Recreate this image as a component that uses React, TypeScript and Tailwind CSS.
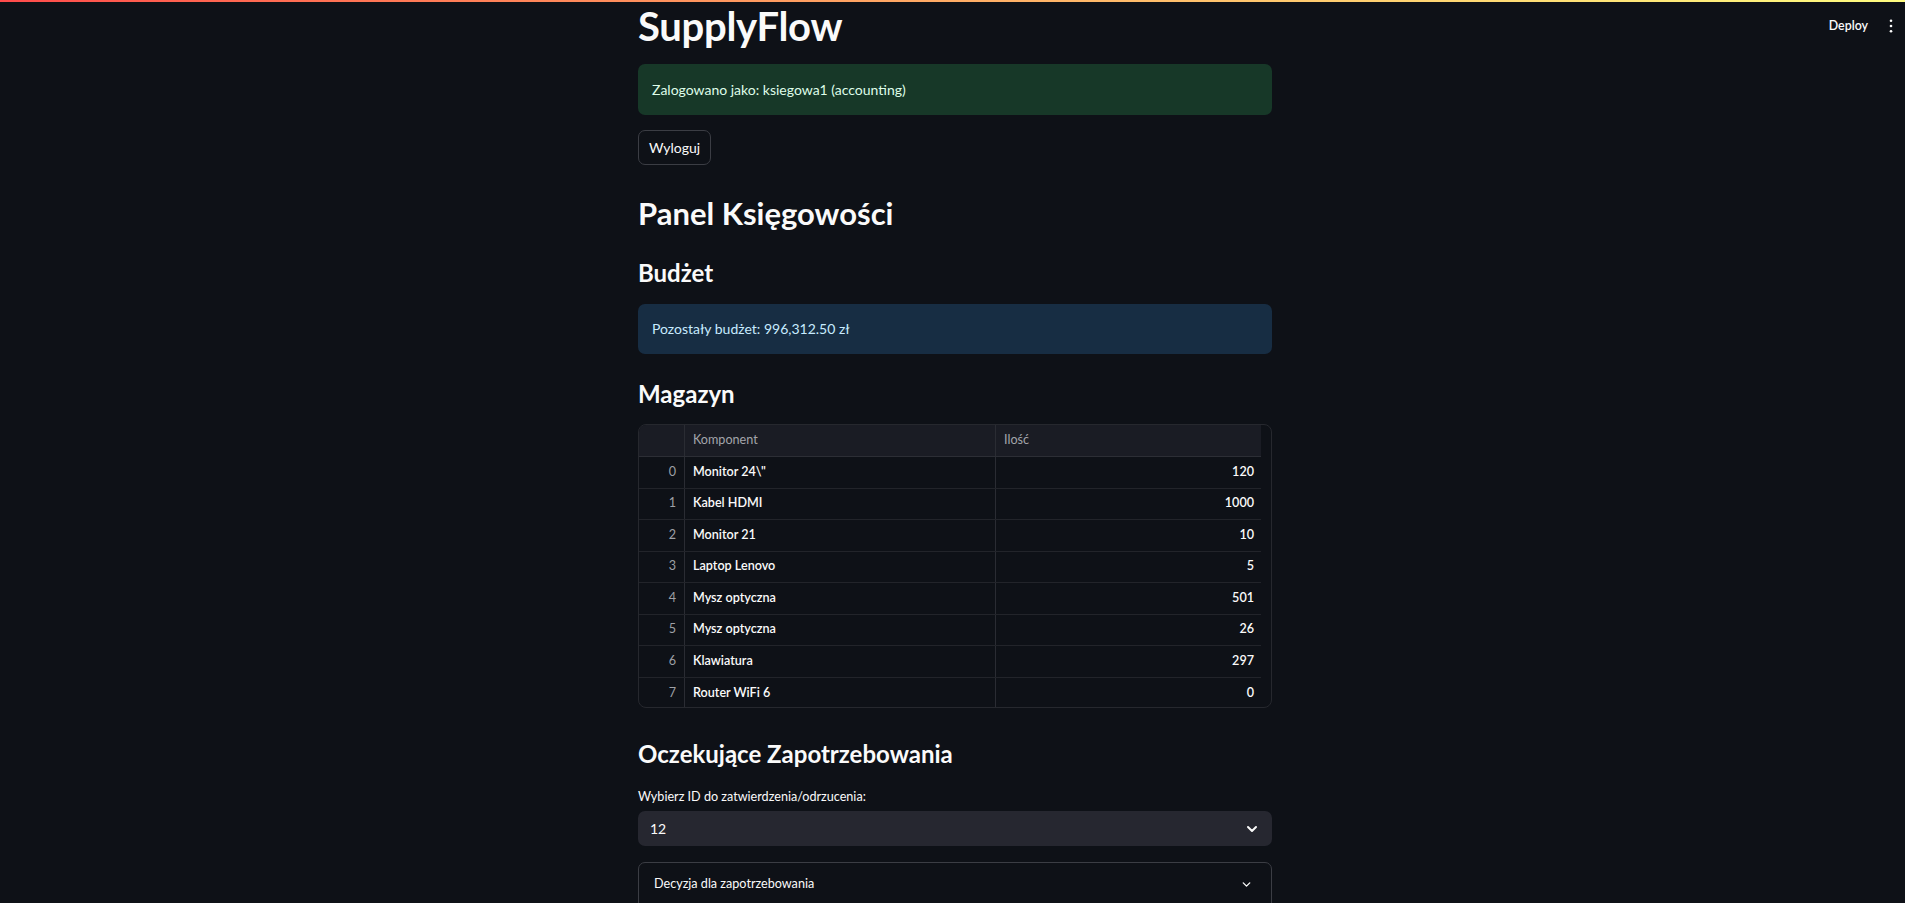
import React from 'react'

const rows = [
    { name: 'Monitor 24\\"', qty: 120 },
    { name: 'Kabel HDMI', qty: 1000 },
    { name: 'Monitor 21', qty: 10 },
    { name: 'Laptop Lenovo', qty: 5 },
    { name: 'Mysz optyczna', qty: 501 },
    { name: 'Mysz optyczna', qty: 26 },
    { name: 'Klawiatura', qty: 297 },
    { name: 'Router WiFi 6', qty: 0 },
]

function Chevron({ className }: { className?: string }) {
    return (
        <svg viewBox="0 0 24 24" fill="none" stroke="currentColor" strokeLinecap="round" strokeLinejoin="round" className={className}>
            <path d="M6 9l6 6 6-6" />
        </svg>
    )
}

export default function App() {
    return (
        <div className="relative h-screen overflow-hidden bg-[#0e1117] text-[#fafafa] font-['Lato','Open_Sans',sans-serif]">
            {/* streamlit header overlay */}
            <div className="absolute inset-x-0 top-0 z-10">
                <div className="h-[2px] bg-gradient-to-r from-[#ff4b4b] to-[#fffd80]" />
                <div className="flex h-[48px] items-center justify-end gap-[21px] pr-[12px]">
                    <span className="text-[12.4px] font-semibold">Deploy</span>
                    <svg viewBox="0 0 4 16" className="h-[14px] w-[4px]" fill="currentColor">
                        <circle cx="2" cy="2" r="1.5" />
                        <circle cx="2" cy="8" r="1.5" />
                        <circle cx="2" cy="14" r="1.5" />
                    </svg>
                </div>
            </div>

            <div className="flex justify-center pl-[5px]">
                <main className="w-[634px] pt-[2px]">
                    <h1 className="text-[40px] font-bold leading-[48px] tracking-[-0.3px]">SupplyFlow</h1>

                    <div className="mt-[14px] rounded-[7px] bg-[#173828] px-[14px] py-[14px] text-[14px] leading-[23px] text-[#dffde9]">
                        Zalogowano jako: ksiegowa1 (accounting)
                    </div>

                    <button className="mt-[15px] h-[35px] rounded-[7px] border border-[#3b3d44] px-[10px] text-[14px]">
                        Wyloguj
                    </button>

                    <h2 className="mt-[28px] text-[31px] font-bold leading-[40px]">Panel Księgowości</h2>

                    <h3 className="mt-[24px] text-[24px] font-bold leading-[32px]">Budżet</h3>

                    <div className="mt-[15px] rounded-[7px] bg-[#172d43] px-[14px] py-[14px] text-[14px] leading-[22px] text-[#c7ebff]">
                        Pozostały budżet: 996,312.50 zł
                    </div>

                    <h3 className="mt-[24px] text-[24px] font-bold leading-[32px]">Magazyn</h3>

                    <div className="mt-[14px] h-[284px] overflow-hidden rounded-[8px] border border-[#26282e] pr-[10px] text-[12.6px]">
                        <div className="grid h-[32px] grid-cols-[46px_311px_266px] items-center border-b border-[#2c2e35] bg-[#1a1c24] text-[#a3a5ab]">
                            <div className="h-full border-r border-[#2a2c33]" />
                            <div className="flex h-full items-center border-r border-[#2a2c33] px-[8px]">Komponent</div>
                            <div className="px-[8px]">Ilość</div>
                        </div>
                        {rows.map((r, i) => (
                            <div key={i} className="grid h-[31.5px] grid-cols-[46px_311px_266px] items-center border-b border-[#22242a] last:border-b-0">
                                <div className="flex h-full items-center justify-end border-r border-[#2a2c33] px-[8px] text-[#9ea0a6]">{i}</div>
                                <div className="flex h-full items-center border-r border-[#2a2c33] px-[8px] font-semibold">{r.name}</div>
                                <div className="px-[8px] text-right font-semibold">{r.qty}</div>
                            </div>
                        ))}
                    </div>

                    <h3 className="mt-[30px] text-[24px] font-bold leading-[32px]">Oczekujące Zapotrzebowania</h3>

                    <label className="mt-[18px] block text-[12.6px] leading-[18px]">Wybierz ID do zatwierdzenia/odrzucenia:</label>

                    <div className="mt-[5px] flex h-[35px] items-center justify-between rounded-[7px] bg-[#262730] pl-[12px] pr-[12px] text-[14px]">
                        <span>12</span>
                        <Chevron className="h-[16px] w-[16px] stroke-[3]" />
                    </div>

                    <div className="mt-[16px] h-[60px] rounded-[7px] border border-[#3b3d44]">
                        <div className="flex h-[42px] items-center justify-between pl-[15px] pr-[18px] text-[12.6px]">
                            <span>Decyzja dla zapotrzebowania</span>
                            <Chevron className="h-[13px] w-[13px] stroke-[2.5]" />
                        </div>
                    </div>
                </main>
            </div>
        </div>
    )
}
